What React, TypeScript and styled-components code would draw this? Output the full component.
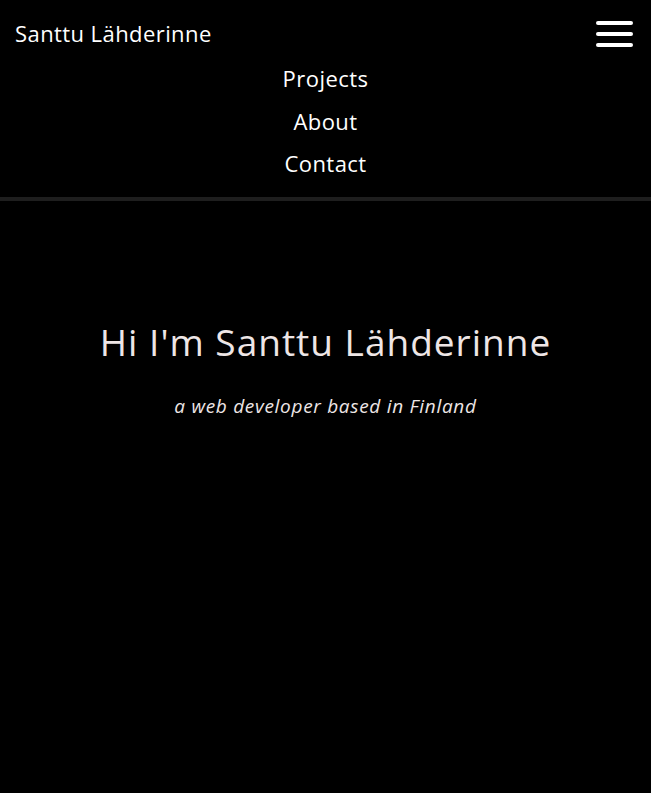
import React from "react";
import styled, { createGlobalStyle } from "styled-components";

const Global = createGlobalStyle`
  html, body { margin: 0; padding: 0; background: #000; }
  body { font-family: "Open Sans", "Noto Sans", sans-serif; color: #fff; }
  * { box-sizing: border-box; }
`;

const Page = styled.div`
  min-height: 793px;
  background: #000;
`;

const Header = styled.header`
  display: flex;
  flex-direction: column;
  border-bottom: 4px solid #1e1e1e;
  padding-bottom: 12px;
`;

const TopRow = styled.div`
  display: flex;
  align-items: center;
  justify-content: space-between;
  height: 48px;
  margin-top: 9px;
  padding: 0 18px 0 15px;
`;

const Brand = styled.a`
  font-size: 22px;
  font-weight: 400;
  color: #fff;
  text-decoration: none;
  letter-spacing: 0.42px;
  margin-top: -1px;
`;

const Burger = styled.button`
  display: flex;
  flex-direction: column;
  justify-content: space-between;
  width: 37px;
  height: 26px;
  margin-top: 2px;
  padding: 0;
  border: 0;
  background: transparent;
  cursor: pointer;
`;

const BurgerLine = styled.span`
  display: block;
  width: 100%;
  height: 4px;
  border-radius: 2px;
  background: #fff;
`;

const Nav = styled.nav`
  display: flex;
  flex-direction: column;
  align-items: center;
`;

const NavLink = styled.a`
  display: flex;
  align-items: center;
  height: 42.5px;
  font-size: 22px;
  letter-spacing: 0.45px;
  color: #fff;
  text-decoration: none;
`;

const Hero = styled.main`
  display: flex;
  flex-direction: column;
  align-items: center;
  padding-top: 116px;
`;

const Title = styled.h1`
  margin: 0;
  font-size: 37px;
  font-weight: 400;
  letter-spacing: 1px;
  color: #eee6e6;
  line-height: 50px;
`;

const Subtitle = styled.p`
  margin: 26px 0 0;
  font-size: 19px;
  font-style: italic;
  letter-spacing: 0.7px;
  color: #eee6e6;
  line-height: 26px;
`;

export default function App() {
  return (
    <Page>
      <Global />
      <Header>
        <TopRow>
          <Brand href="#">Santtu Lähderinne</Brand>
          <Burger aria-label="menu">
            <BurgerLine />
            <BurgerLine />
            <BurgerLine />
          </Burger>
        </TopRow>
        <Nav>
          <NavLink href="#">Projects</NavLink>
          <NavLink href="#">About</NavLink>
          <NavLink href="#">Contact</NavLink>
        </Nav>
      </Header>
      <Hero>
        <Title>Hi I'm Santtu Lähderinne</Title>
        <Subtitle>a web developer based in Finland</Subtitle>
      </Hero>
    </Page>
  );
}
